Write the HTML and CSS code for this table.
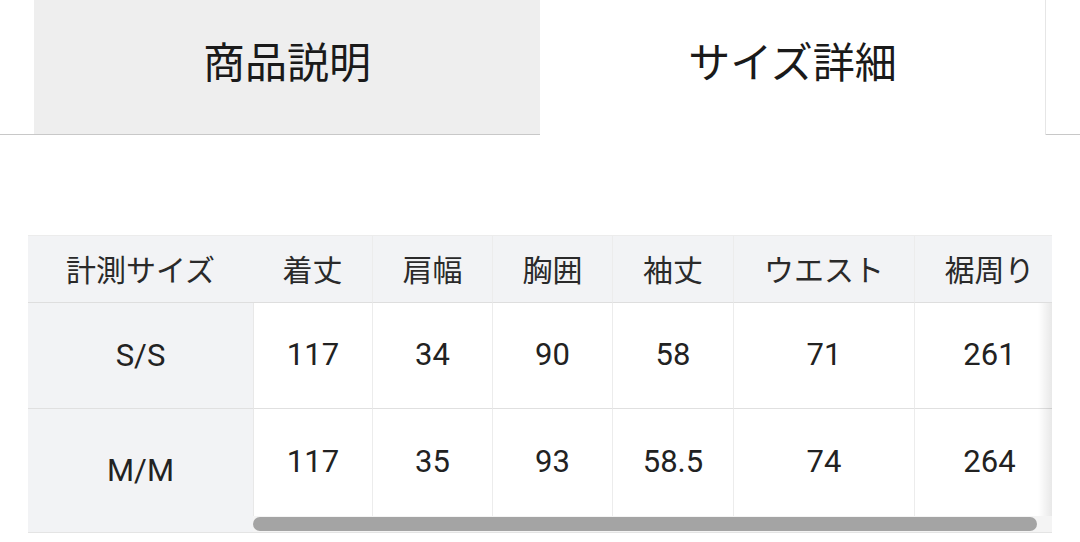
FILE: index.html
```html
<!DOCTYPE html>
<html lang="ja">
<head>
<meta charset="utf-8">
<link rel="stylesheet" href="styles.css">
</head>
<body>
<div class="tabs">
  <div class="tab">商品説明</div>
  <div class="tab active">サイズ詳細</div>
</div>
<div class="size-table">
  <div class="fixed-col">
    <div class="cell head">計測サイズ</div>
    <div class="cell row1">S/S</div>
    <div class="cell row2">M/M</div>
  </div>
  <div class="scroll">
    <div class="grid">
      <div class="cell head">着丈</div>
      <div class="cell head">肩幅</div>
      <div class="cell head">胸囲</div>
      <div class="cell head">袖丈</div>
      <div class="cell head">ウエスト</div>
      <div class="cell head">裾周り</div>
      <div class="cell data r1">117</div>
      <div class="cell data r1">34</div>
      <div class="cell data r1">90</div>
      <div class="cell data r1">58</div>
      <div class="cell data r1">71</div>
      <div class="cell data r1">261</div>
      <div class="cell data r2">117</div>
      <div class="cell data r2">35</div>
      <div class="cell data r2">93</div>
      <div class="cell data r2">58.5</div>
      <div class="cell data r2">74</div>
      <div class="cell data r2">264</div>
    </div>
    <div class="shade"></div>
    <div class="scrollbar"><div class="thumb"></div></div>
  </div>
</div>
</body>
</html>
```
FILE: styles.css
```css
html, body {
  margin: 0;
  padding: 0;
  background: #fff;
}
body {
  width: 1080px;
  height: 542px;
  overflow: hidden;
  font-family: Roboto, "Noto Sans CJK JP", sans-serif;
  color: #222;
}
.tabs {
  display: flex;
  padding: 0 34px;
  height: 134px;
  border-bottom: 1px solid #c8c8c8;
}
.tab {
  width: 506px;
  display: flex;
  align-items: center;
  justify-content: center;
  padding-bottom: 16px;
  box-sizing: border-box;
  font-family: "Noto Sans CJK JP", sans-serif;
  font-size: 42px;
  color: #1a1a1a;
  background: #eeeeee;
}
.tab.active {
  background: #fff;
  border-right: 1px solid #e6e6e6;
  height: 135px;
}
.size-table {
  display: flex;
  margin: 100px 0 0 28px;
  width: 1024px;
  border-top: 1px solid #ececec;
  border-bottom: 1px solid #e4e4e4;
}
.cell {
  display: flex;
  align-items: center;
  justify-content: center;
  box-sizing: border-box;
  font-size: 31px;
}
.head {
  height: 67px;
  background: #f2f3f5;
  font-family: "Noto Sans CJK JP", sans-serif;
  color: #2a2a2a;
  font-size: 30px;
  padding-bottom: 3px;
}
.fixed-col {
  width: 225px;
  flex: none;
  background: #f2f3f5;
}
.fixed-col .head {
  border-bottom: 1px solid #dedede;
}
.row1 {
  height: 106px;
  border-bottom: 1px solid #e0e0e0;
}
.row2 {
  height: 123px;
}
.scroll {
  position: relative;
  width: 799px;
  overflow: hidden;
  background: #fff;
}
.grid {
  display: grid;
  grid-template-columns: 119px 120px 120px 121px 181px 150px;
  width: 811px;
}
.grid .head {
  border-bottom: 1px solid #dedede;
}
.grid .head + .head {
  border-left: 1px solid #ececec;
}
.data {
  background: #fff;
  border-left: 1px solid #ececec;
  padding-bottom: 2px;
}
.data.r1 {
  height: 106px;
  border-bottom: 1px solid #e0e0e0;
}
.data.r2 {
  height: 107px;
}
.grid .data:nth-child(6n+1) {
  border-left: 1px solid #e8e8e8;
}
.shade {
  position: absolute;
  right: 0;
  top: 67px;
  width: 14px;
  height: 213px;
  background: linear-gradient(to right, rgba(0,0,0,0), rgba(0,0,0,0.09));
}
.scrollbar {
  height: 16px;
  background: #f4f4f4;
  display: flex;
  align-items: center;
}
.thumb {
  width: 784px;
  height: 14px;
  border-radius: 7px;
  background: #a4a4a4;
}
```
